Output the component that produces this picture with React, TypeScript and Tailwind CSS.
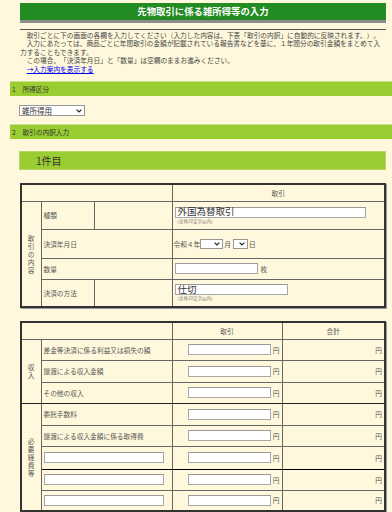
const cell = 'border border-[#666] p-0';

function Chevron() {
  return (
    <svg width="6" height="4" viewBox="0 0 6 4" className="shrink-0">
      <path d="M0.6 0.6 L3 3 L5.4 0.6" fill="none" stroke="#222" strokeWidth="1.2" />
    </svg>
  );
}

function Field({ className, value }: { className: string; value?: string }) {
  return (
    <div
      className={
        'h-[11px] bg-white border border-[#a8a8a8] border-t-[#999] flex items-center pl-[2px] text-[9.5px] text-[#333] leading-none ' +
        className
      }
    >
      {value}
    </div>
  );
}

const income = [
  { label: '差金等決済に係る利益又は損失の額', h: 'h-[21px]' },
  { label: '譲渡による収入金額', h: 'h-[22px]' },
  { label: 'その他の収入', h: 'h-[21px]' },
];

const costs = [
  { label: '委託手数料', h: 'h-[22px]' },
  { label: '譲渡による収入金額に係る取得費', h: 'h-[21px]' },
  { label: '', h: 'h-[23px]' },
  { label: '', h: 'h-[21px]' },
  { label: '', h: 'h-[21px]' },
];

function YenCells({ edge }: { edge: string }) {
  return (
    <>
      <td className={cell + ' ' + edge}>
        <div className="flex items-center justify-end gap-[2px] pr-[2px]">
          <Field className="w-[83px]" />
          <span>円</span>
        </div>
      </td>
      <td className={cell + ' text-right pr-[2px] ' + edge}>円</td>
    </>
  );
}

export default function App() {
  return (
    <div className="min-h-screen overflow-hidden bg-[#fff8dc] pt-[3px] pb-[20px] font-['Noto_Sans_CJK_JP',sans-serif] text-[#333] [text-spacing-trim:space-all]">
      <div className="ml-[20px] mr-[6px]">
        <div className="h-[20px] bg-[#228b22] border-b-[3px] border-[#8c8c8c] flex items-center justify-center text-white font-bold text-[9.4px]">
          先物取引に係る雑所得等の入力
        </div>
        <div className="mt-[6px] border-t border-[#555] pt-[1px] text-[6.7px] leading-[8.4px] text-[#444] whitespace-nowrap">
          <div>　取引ごとに下の画面の各欄を入力してください（入力した内容は、下表「取引の内訳」に自動的に反映されます。）。</div>
          <div>　入力にあたっては、商品ごとに年間取引の金額が記載されている報告書などを基に、１年間分の取引金額をまとめて入</div>
          <div>力することもできます。</div>
          <div>　この場合、「決済年月日」と「数量」は空欄のままお進みください。</div>
          <div className="pl-[6.7px]">
            <span className="text-[#0000ee] underline">→入力案内を表示する</span>
          </div>
        </div>
      </div>

      <div className="mt-[8px] ml-[10px] h-[15px] bg-[#9acd32] border-t border-[#c9e58c] flex items-center pl-[2px] text-[6.7px] text-[#333]">
        1　所得区分
      </div>
      <div className="mt-[9px] ml-[19px] w-[66px] h-[11px] bg-white border border-[#999] flex items-center justify-between px-[2px] text-[7.5px] text-[#333]">
        <span>雑所得用</span>
        <Chevron />
      </div>
      <div className="mt-[8px] ml-[10px] h-[15px] bg-[#9acd32] border-t border-[#c9e58c] flex items-center pl-[2px] text-[6.7px] text-[#333]">
        2　取引の内訳入力
      </div>

      <div className="mt-[12px] ml-[19px] mr-[6px] h-[19px] bg-[#9acd32] border border-[#b3d866] flex items-center pl-[16px] text-[10px] text-[#333]">
        1件目
      </div>

      <table className="mt-[13px] ml-[20px] w-[366px] table-fixed border-collapse border-2 border-[#333] shadow-[1px_1px_0_#999] text-[6.7px] text-[#555]">
        <colgroup>
          <col className="w-[20px]" />
          <col className="w-[53px]" />
          <col className="w-[78px]" />
          <col />
        </colgroup>
        <tbody>
          <tr className="h-[17px]">
            <td colSpan={3} className={cell} />
            <td className={cell + ' text-center'}>取引</td>
          </tr>
          <tr className="h-[28px]">
            <td rowSpan={4} className={cell}>
              <div className="w-[7px] mx-auto leading-[8px]">取引の内容</div>
            </td>
            <td className={cell + ' pl-[2px]'}>種類</td>
            <td className={cell} />
            <td className={cell + ' pl-[2px]'}>
              <Field className="w-[191px]" value="外国為替取引" />
              <div className="mt-[1px] text-[4.5px] leading-[5px] text-[#777]">（全角18文字以内）</div>
            </td>
          </tr>
          <tr className="h-[29px]">
            <td colSpan={2} className={cell + ' pl-[2px]'}>決済年月日</td>
            <td className={cell + ' pl-[1px]'}>
              <div className="flex items-center">
                <span>令和４年</span>
                <div className="w-[23px] h-[10px] bg-white border border-[#999] flex items-center justify-end pr-[2px]">
                  <Chevron />
                </div>
                <span className="ml-[1px]">月</span>
                <div className="ml-[2px] w-[15px] h-[10px] bg-white border border-[#999] flex items-center justify-end pr-[2px]">
                  <Chevron />
                </div>
                <span className="ml-[1px]">日</span>
              </div>
            </td>
          </tr>
          <tr className="h-[21px]">
            <td colSpan={2} className={cell + ' pl-[2px]'}>数量</td>
            <td className={cell + ' pl-[2px]'}>
              <div className="flex items-center gap-[3px]">
                <Field className="w-[83px]" />
                <span>枚</span>
              </div>
            </td>
          </tr>
          <tr className="h-[28px]">
            <td className={cell + ' pl-[2px]'}>決済の方法</td>
            <td className={cell} />
            <td className={cell + ' pl-[2px]'}>
              <Field className="w-[113px]" value="仕切" />
              <div className="mt-[1px] text-[4.5px] leading-[5px] text-[#777]">（全角10文字以内）</div>
            </td>
          </tr>
        </tbody>
      </table>

      <table className="mt-[13px] ml-[20px] w-[366px] table-fixed border-collapse border-2 border-[#333] shadow-[1px_1px_0_#999] text-[6.7px] text-[#555]">
        <colgroup>
          <col className="w-[20px]" />
          <col className="w-[131px]" />
          <col className="w-[110px]" />
          <col />
        </colgroup>
        <tbody>
          <tr className="h-[17px]">
            <td colSpan={2} className={cell} />
            <td className={cell + ' text-center'}>取引</td>
            <td className={cell + ' text-center'}>合計</td>
          </tr>
          {income.map((r, i) => {
            const edge = i === income.length - 1 ? 'border-b-[#222]' : '';
            return (
              <tr key={r.label} className={r.h}>
                {i === 0 && (
                  <td rowSpan={income.length} className={cell + ' border-b-[#222]'}>
                    <div className="w-[7px] mx-auto leading-[8px]">収入</div>
                  </td>
                )}
                <td className={cell + ' pl-[2px] ' + edge}>{r.label}</td>
                <YenCells edge={edge} />
              </tr>
            );
          })}
          {costs.map((r, i) => {
            const edge = i === 2 ? 'border-b-black' : '';
            return (
              <tr key={i} className={r.h}>
                {i === 0 && (
                  <td rowSpan={costs.length} className={cell}>
                    <div className="w-[7px] mx-auto leading-[8px]">必要経費等</div>
                  </td>
                )}
                <td className={cell + ' pl-[2px] ' + edge}>
                  {r.label ? r.label : <Field className="w-[120px]" />}
                </td>
                <YenCells edge={edge} />
              </tr>
            );
          })}
        </tbody>
      </table>
    </div>
  );
}
